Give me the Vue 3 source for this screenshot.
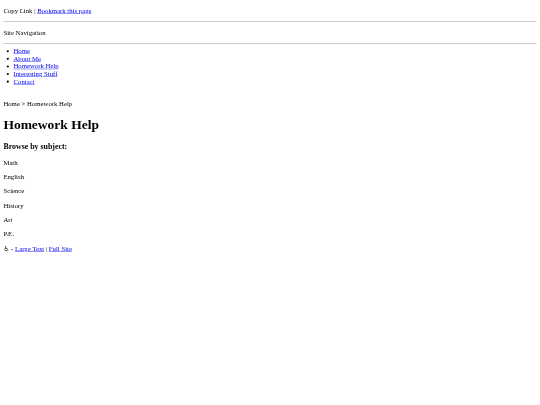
<template>
  <div class="frame">
    <div class="page">
      <p class="first">Copy Link | <a href="#">Bookmark this page</a></p>
      <hr />
      <p>Site Navigation</p>
      <hr />
      <ul class="nav">
        <li v-for="item in nav" :key="item"><a href="#">{{ item }}</a></li>
      </ul>
      <p>Home &gt; Homework Help</p>
      <h1>Homework Help</h1>
      <h3>Browse by subject:</h3>
      <p v-for="s in subjects" :key="s">{{ s }}</p>
      <p><span class="chair">♿</span> - <a href="#">Large Text</a> | <a href="#">Full Site</a></p>
    </div>
  </div>
</template>

<script setup>
const nav = ['Home', 'About Me', 'Homework Help', 'Interesting Stuff', 'Contact']
const subjects = ['Math', 'English', 'Science', 'History', 'Art', 'P.E.']
</script>

<style>
body {
  margin: 0;
  background: #fff;
}
</style>

<style scoped>
.frame {
  height: 405px;
  overflow: hidden;
}
/* the reference is a 1280px wide page scaled down to 540px */
.page {
  width: 1264px;
  padding: 1px 8px;
  transform: scale(0.421875);
  transform-origin: 0 0;
  filter: blur(0.6px);
  font-family: "Liberation Serif", serif;
  font-size: 16px;
  color: #000;
}
a {
  color: #00e;
}
p {
  margin: 16px 0;
}
.first {
  margin-top: 15px;
}
hr {
  margin: 16px 0;
  border: 0;
  height: 2px;
  background: #c4c4c4;
}
.nav {
  margin: -8px 0 35px;
  padding-left: 24px;
}
h1 {
  margin: 21.44px 0;
  font-size: 32px;
}
h3 {
  margin: 18.72px 0;
  font-size: 18.72px;
}
.chair {
  font-family: "DejaVu Sans", sans-serif;
  font-variant-emoji: text;
}
</style>
